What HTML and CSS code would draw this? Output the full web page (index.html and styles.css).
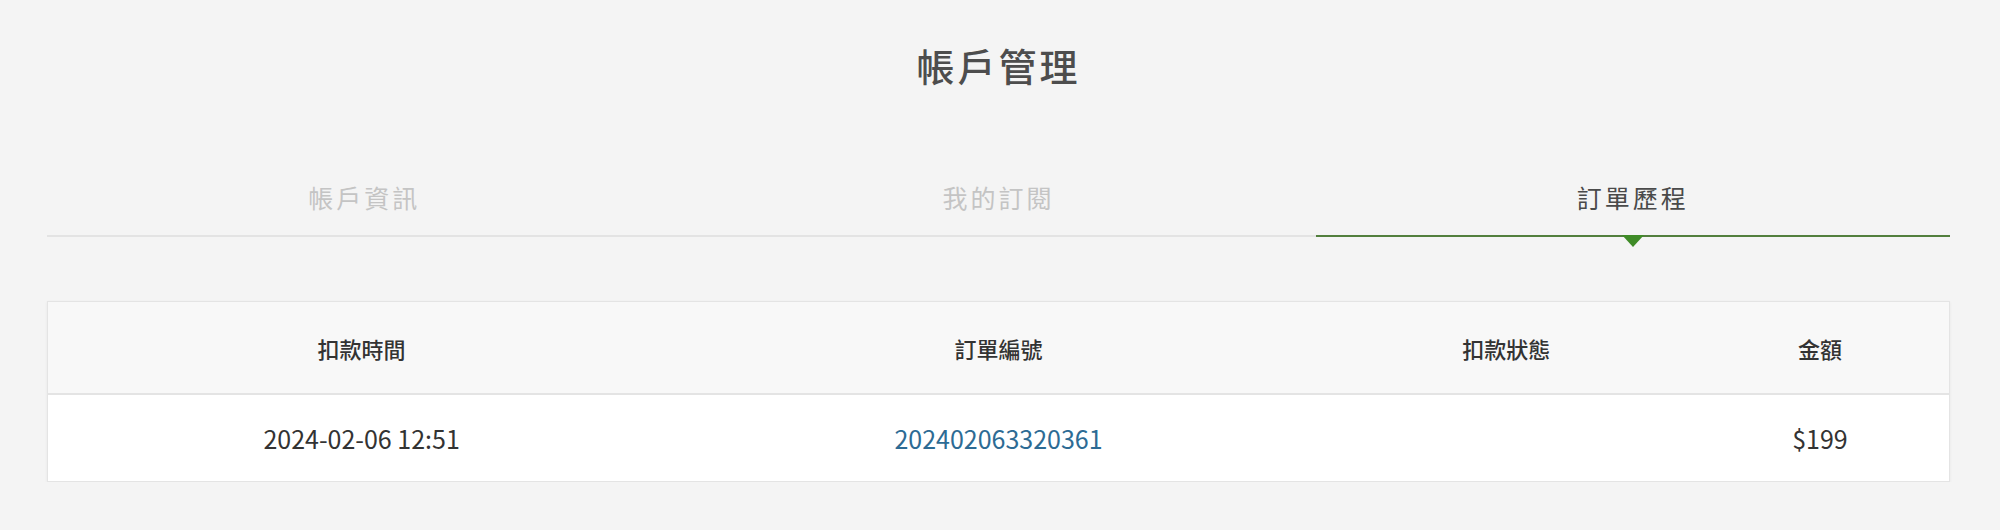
FILE: index.html
```html
<!DOCTYPE html>
<html lang="zh-Hant">
<head>
  <meta charset="UTF-8">
  <meta name="viewport" content="width=device-width,initial-scale=1.0">
  <title>帳戶管理</title>
  <link rel="stylesheet" href="styles.css">
</head>
<body>

<div class="container">
  <h1>帳戶管理</h1>

  <div class="tabs">
    <div class="tab">帳戶資訊</div>
    <div class="tab">我的訂閱</div>
    <div class="tab active">訂單歷程</div>
  </div>

  <table class="orders">
    <colgroup>
      <col class="col-time">
      <col class="col-no">
      <col class="col-status">
      <col>
    </colgroup>
    <thead>
      <tr>
        <th>扣款時間</th>
        <th>訂單編號</th>
        <th>扣款狀態</th>
        <th>金額</th>
      </tr>
    </thead>
    <tbody>
      <tr>
        <td>2024-02-06 12:51</td>
        <td><a href="#">202402063320361</a></td>
        <td></td>
        <td>$199</td>
      </tr>
    </tbody>
  </table>
</div>

</body>
</html>
```

FILE: styles.css
```css
body {
  margin: 0;
  font-family: "Noto Sans CJK TC", "Noto Sans", sans-serif;
  background-color: #f4f4f4;
  color: #333;
}
.container {
  padding: 38px 50px 0 47px;
}
h1 {
  margin: 0;
  text-align: center;
  font-size: 38px;
  line-height: 53px;
  font-weight: 500;
  letter-spacing: 3px;
  color: #4d4d4d;
}
.tabs {
  display: flex;
  margin-top: 88px;
  border-bottom: 2px solid #e3e3e3;
}
.tab {
  flex: 1;
  position: relative;
  text-align: center;
  font-size: 25px;
  line-height: 36px;
  letter-spacing: 3px;
  padding-bottom: 20px;
  margin-bottom: -2px;
  color: #c4c4c4;
  border-bottom: 2px solid transparent;
}
.tab.active {
  color: #4a4a4a;
  border-bottom-color: #527f3d;
}
.tab.active::after {
  content: "";
  position: absolute;
  left: 50%;
  top: 100%;
  margin-left: -11px;
  border-left: 11px solid transparent;
  border-right: 11px solid transparent;
  border-top: 12px solid #3f8b27;
}
.orders {
  width: 100%;
  margin-top: 64px;
  border-collapse: collapse;
  border: 1px solid #e4e4e4;
  box-shadow: 0 1px 3px rgba(0,0,0,0.06);
}
.col-time { width: 33%; }
.col-no { width: 34%; }
.col-status { width: 19.4%; }
.orders th,
.orders td {
  text-align: center;
  padding: 0;
}
.orders th {
  height: 91px;
  background: #f8f8f8;
  font-size: 22px;
  font-weight: 500;
  color: #333;
  border-bottom: 2px solid #e4e4e4;
}
.orders td {
  height: 86px;
  background: #fff;
  font-size: 25px;
  color: #333;
}
.orders a {
  color: #2d6b94;
  text-decoration: none;
}
```
